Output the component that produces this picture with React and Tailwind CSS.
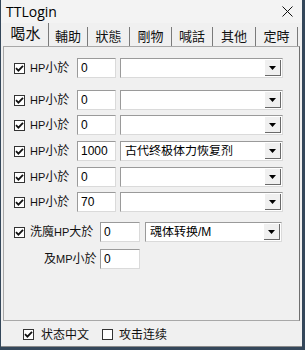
import { useState } from 'react'

const FONT = { fontFamily: '"Liberation Sans", "Noto Sans CJK TC", sans-serif' }

const TABS = [
  { label: '喝水', w: 'w-[46px]' },
  { label: '輔助', w: 'w-[39px]' },
  { label: '狀態', w: 'w-[42px]' },
  { label: '剛物', w: 'w-[42px]' },
  { label: '喊話', w: 'w-[41px]' },
  { label: '其他', w: 'w-[43px]' },
  { label: '定時', w: 'w-[42px]' },
]

const ROWS = [
  { value: '0', item: '', mt: 'mt-[11px]' },
  { value: '0', item: '', mt: 'mt-[12px]' },
  { value: '0', item: '', mt: 'mt-[5px]' },
  { value: '1000', item: '古代终极体力恢复剂', mt: 'mt-[6px]' },
  { value: '0', item: '', mt: 'mt-[6px]' },
  { value: '70', item: '', mt: 'mt-[5px]' },
]

function Check({ checked }) {
  return (
    <span className="flex h-[11px] w-[11px] shrink-0 items-center justify-center border border-[#333] bg-white">
      {checked && (
        <svg width="9" height="9" viewBox="0 0 9 9">
          <path d="M1 4.2 L3.4 6.6 L8 1.8" fill="none" stroke="#111" strokeWidth="1.8" />
        </svg>
      )}
    </span>
  )
}

function Box({ value, w = 'w-[39px]' }) {
  return (
    <div className={`${w} flex h-[20px] shrink-0 items-center border border-[#9a9a9a] border-b-[#dadada] border-r-[#dadada] bg-white pl-[3px] text-[12px] text-black`}>
      {value}
    </div>
  )
}

function Combo({ text, w = 'w-[163px]' }) {
  return (
    <div className={`${w} flex h-[20px] shrink-0 items-center border border-[#9a9a9a] border-b-[#dadada] border-r-[#dadada] bg-white p-[1px]`}>
      <span className="flex-1 truncate pl-[3px] text-[12px] leading-none text-black">{text}</span>
      <span className="flex h-full w-[16px] items-center justify-center border-b border-r border-[#6a6a6a] bg-[#f0f0f0]">
        <svg width="7" height="4" viewBox="0 0 7 4"><path d="M0 0 H7 L3.5 4 Z" fill="#000" /></svg>
      </span>
    </div>
  )
}

export default function App() {
  const [tab] = useState(0)

  return (
    <div className="h-[350px] w-[305px] bg-[#34475a]" style={FONT}>
      <div className="ml-[1px] flex h-[347px] w-[301px] flex-col border-b border-[#8a8a8a] bg-[#f0f0f0]">
        {/* title */}
        <div className="flex h-[23px] items-center justify-between bg-[#f3f3f3] pl-[5px] pr-[9px]">
          <span className="text-[14px] text-black" style={{ fontFamily: '"Open Sans", "Liberation Sans", sans-serif' }}>TTLogin</span>
          <svg width="11" height="11" viewBox="0 0 11 11">
            <path d="M0.5 0.5 L10.5 10.5 M10.5 0.5 L0.5 10.5" stroke="#111" strokeWidth="1" />
          </svg>
        </div>

        {/* tabs */}
        <div className="flex h-[23px] items-end pl-[2px]">
          {TABS.map((t, i) => (
            <div
              key={t.label}
              className={`${t.w} flex items-center justify-center border-r border-[#7a7a7a] text-[#111] ${
                i === tab ? 'h-[23px] text-[15px]' : 'h-[19px] text-[13px]'
              }`}
            >
              {t.label}
            </div>
          ))}
        </div>

        {/* panel */}
        <div className="mx-[2px] flex h-[275px] flex-col border border-[#a8a8a8] border-r-[#6f6f6f]">
          {ROWS.map((r, i) => (
            <div key={i} className={`${r.mt} flex h-[20px] items-center pl-[10px]`}>
              <Check checked />
              <span className="ml-[5px] w-[47px] shrink-0 text-[12px] leading-none text-[#111]">
                <span className="text-[11px]">HP</span>小於
              </span>
              <Box value={r.value} />
              <span className="ml-[4px]"><Combo text={r.item} /></span>
            </div>
          ))}

          <div className="mt-[10px] flex h-[20px] items-center pl-[10px]">
            <Check checked />
            <span className="ml-[5px] w-[70px] shrink-0 text-[12px] leading-none text-[#111]">
              洗魔<span className="text-[11px]">HP</span>大於
            </span>
            <Box value="0" w="w-[40px]" />
            <span className="ml-[5px]"><Combo text="魂体转换/M" w="w-[137px]" /></span>
          </div>

          <div className="mt-[7px] flex h-[20px] items-center pl-[40px]">
            <span className="w-[56px] shrink-0 text-[12px] leading-none text-[#111]">
              及<span className="text-[11px]">MP</span>小於
            </span>
            <Box value="0" w="w-[40px]" />
          </div>
        </div>

        {/* footer */}
        <div className="flex flex-1 items-center pl-[22px] pt-[2px]">
          <Check checked />
          <span className="ml-[7px] text-[12px] text-[#111]">状态中文</span>
          <span className="ml-[13px]"><Check /></span>
          <span className="ml-[6px] text-[12px] text-[#111]">攻击连续</span>
        </div>
      </div>
    </div>
  )
}
